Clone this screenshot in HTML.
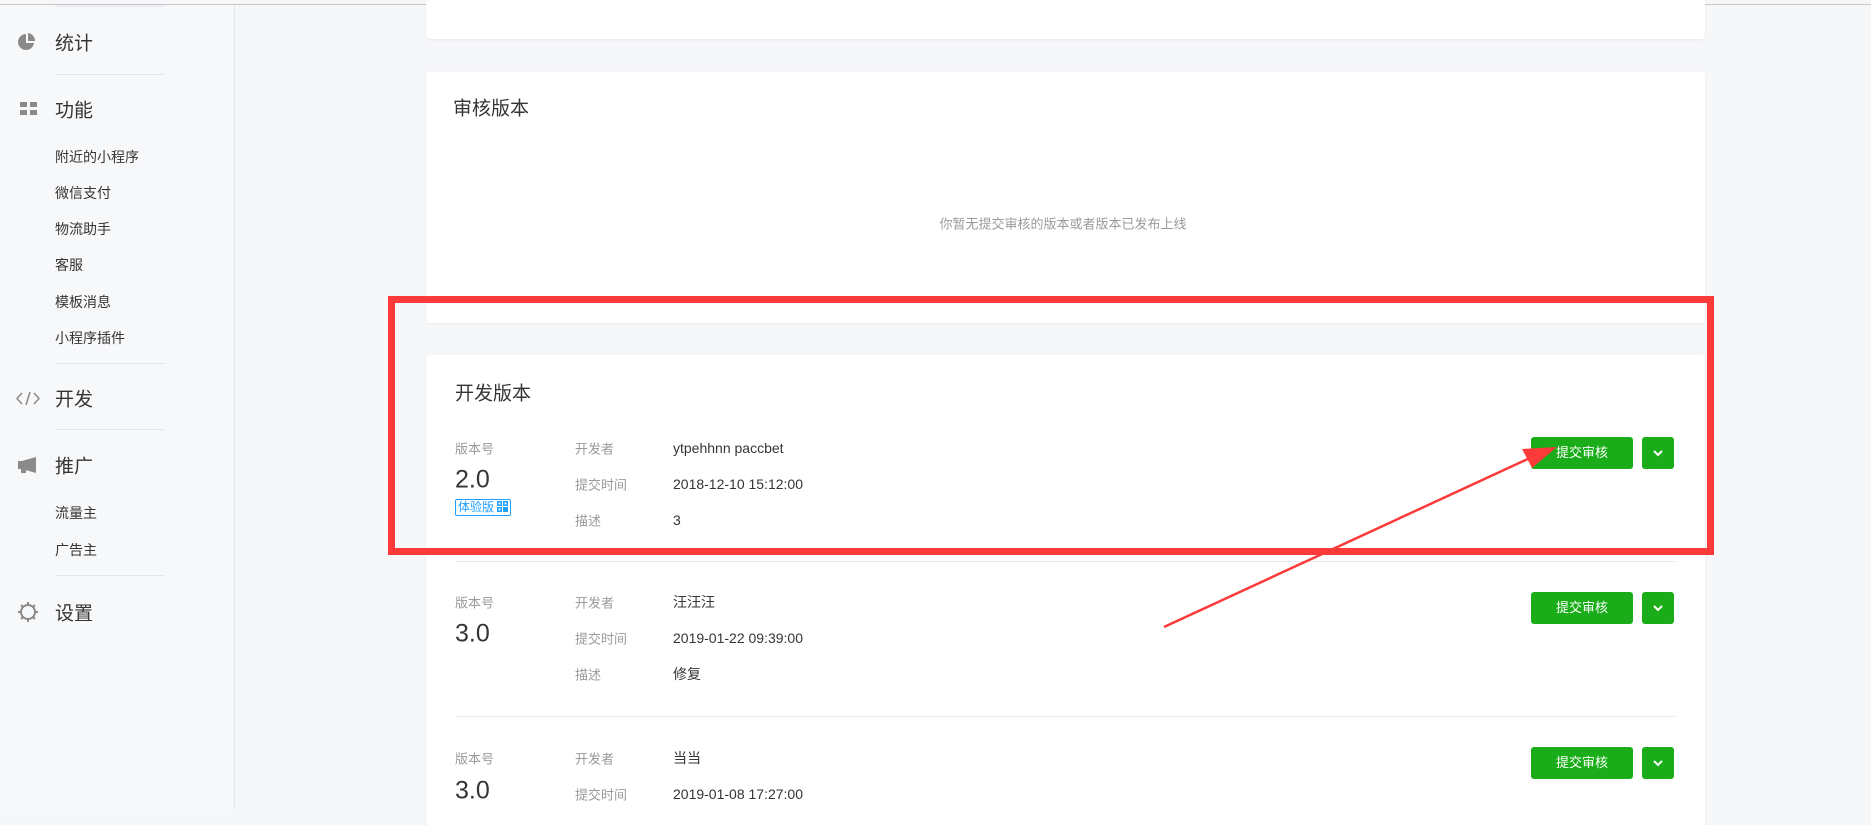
<!DOCTYPE html>
<html><head><meta charset="utf-8"><style>
*{margin:0;padding:0;box-sizing:border-box}
body{width:1871px;height:810px;overflow:hidden;background:#f6f7f9;font-family:"Liberation Sans","Noto Sans CJK SC",sans-serif;position:relative;color:#353535}
.a{position:absolute;white-space:nowrap}
.topline{position:absolute;left:0;top:4px;width:1871px;height:1px;background:#c8c8c8}
.side{position:absolute;left:0;top:5px;width:235px;height:805px;background:#f7f8fa;border-right:1px solid #e4e6e9}
.sep{position:absolute;left:55px;width:110px;height:1px;background:#e4e6e9}
.m{font-size:19px;color:#353535;transform:translateY(-50%)}
.s{font-size:14px;color:#353535;transform:translateY(-50%);left:55px}
.card{position:absolute;background:#fff;left:426px;width:1279px;border-radius:3px;box-shadow:0 1px 2px rgba(0,0,0,.06)}
.lbl{font-size:13px;color:#9a9a9a;transform:translateY(-50%)}
.val{font-size:14px;color:#353535;transform:translateY(-50%)}
.ver{font-size:25px;color:#353535;transform:translateY(-50%)}
.btn{position:absolute;background:#1aad19;color:#fff;font-size:13px;border-radius:3px;text-align:center;line-height:32px;height:32px}
.dd{position:absolute;background:#1aad19;border-radius:3px;width:32px;height:32px}
.hl{position:absolute;left:455px;width:1220px;height:1px;background:#e7e7eb}
</style></head><body>
<div class="topline"></div>
<div class="side"></div>
<div class="sep" style="top:5px;background:#eceef1;height:2px"></div>
<svg class="a" style="left:18px;top:33px" width="18" height="17" viewBox="0 0 18 17"><path d="M8 1A8 8 0 1 0 16 10H8Z" fill="#8a8a8a"/><path d="M10 0A8 8 0 0 1 17 8H10Z" fill="#8a8a8a"/></svg>
<div class="a m" style="left:55px;top:42px">统计</div>
<div class="sep" style="top:74px"></div>
<svg class="a" style="left:20px;top:102px" width="17" height="13"><rect x="0" y="0" width="7" height="5" fill="#8a8a8a"/><rect x="10" y="0" width="7" height="5" fill="#8a8a8a"/><rect x="0" y="8" width="7" height="5" fill="#8a8a8a"/><rect x="10" y="8" width="7" height="5" fill="#8a8a8a"/></svg>
<div class="a m" style="left:55px;top:109px">功能</div>
<div class="a s" style="top:157px">附近的小程序</div>
<div class="a s" style="top:193px">微信支付</div>
<div class="a s" style="top:229px">物流助手</div>
<div class="a s" style="top:265px">客服</div>
<div class="a s" style="top:302px">模板消息</div>
<div class="a s" style="top:338px">小程序插件</div>
<div class="sep" style="top:363px"></div>
<svg class="a" style="left:16px;top:391px" width="24" height="15" fill="none" stroke="#8a8a8a" stroke-width="1.5"><path d="M6 2L1 7.5L6 13M18 2L23 7.5L18 13M14 1L10 14"/></svg>
<div class="a m" style="left:55px;top:398px">开发</div>
<div class="sep" style="top:429px"></div>
<svg class="a" style="left:18px;top:457px" width="20" height="16"><path d="M0 4H4L18 0V16L4 12H0Z" fill="#8a8a8a"/><rect x="3" y="11" width="5" height="5" fill="#8a8a8a"/></svg>
<div class="a m" style="left:55px;top:465px">推广</div>
<div class="a s" style="top:513px">流量主</div>
<div class="a s" style="top:550px">广告主</div>
<div class="sep" style="top:575px"></div>
<svg class="a" style="left:17px;top:601px" width="22" height="22" viewBox="0 0 22 22" fill="none" stroke="#8a8a8a" stroke-width="2"><circle cx="11" cy="11" r="7"/><path d="M11 1V4M11 18V21M1 11H4M18 11H21M4 4L6 6M16 16L18 18M18 4L16 6M4 18L6 16"/></svg>
<div class="a m" style="left:55px;top:612px">设置</div>

<div class="card" style="top:0;height:39px"></div>
<div class="card" style="top:72px;height:251px"></div>
<div class="a" style="left:453px;top:107px;transform:translateY(-50%);font-size:19px">审核版本</div>
<div class="a" style="left:1063px;top:223px;transform:translate(-50%,-50%);font-size:13px;color:#9a9a9a">你暂无提交审核的版本或者版本已发布上线</div>
<div class="card" style="top:355px;height:470px"></div>
<div class="a" style="left:455px;top:392px;transform:translateY(-50%);font-size:19px">开发版本</div>

<div class="a lbl" style="left:455px;top:448px">版本号</div>
<div class="a ver" style="left:455px;top:480px">2.0</div>
<div class="a" style="left:455px;top:499px;height:17px;border:1px solid #1e9fff;border-radius:2px;font-size:12px;line-height:15px;color:#1e9fff;padding:0 2px">体验版 <svg width="11" height="11" style="vertical-align:-1px" fill="#1e9fff"><rect x="0" y="0" width="5" height="5"/><rect x="6" y="0" width="5" height="5"/><rect x="0" y="6" width="5" height="5"/><rect x="6" y="6" width="5" height="5"/><rect x="1.5" y="1.5" width="2" height="2" fill="#fff"/><rect x="7.5" y="1.5" width="2" height="2" fill="#fff"/><rect x="1.5" y="7.5" width="2" height="2" fill="#fff"/></svg></div>
<div class="a lbl" style="left:575px;top:448px">开发者</div>
<div class="a lbl" style="left:575px;top:484px">提交时间</div>
<div class="a lbl" style="left:575px;top:520px">描述</div>
<div class="a val" style="left:673px;top:448px">ytpehhnn paccbet</div>
<div class="a val" style="left:673px;top:484px">2018-12-10 15:12:00</div>
<div class="a val" style="left:673px;top:520px">3</div>
<div class="btn" style="left:1531px;top:437px;width:102px">提交审核</div>
<div class="dd" style="left:1642px;top:437px"><svg width="32" height="32" fill="none" stroke="#fff" stroke-width="2"><path d="M12 14L16 18L20 14"/></svg></div>
<div class="hl" style="top:561px"></div>

<div class="a lbl" style="left:455px;top:602px">版本号</div>
<div class="a ver" style="left:455px;top:634px">3.0</div>
<div class="a lbl" style="left:575px;top:602px">开发者</div>
<div class="a lbl" style="left:575px;top:638px">提交时间</div>
<div class="a lbl" style="left:575px;top:674px">描述</div>
<div class="a val" style="left:673px;top:602px">汪汪汪</div>
<div class="a val" style="left:673px;top:638px">2019-01-22 09:39:00</div>
<div class="a val" style="left:673px;top:674px">修复</div>
<div class="btn" style="left:1531px;top:592px;width:102px">提交审核</div>
<div class="dd" style="left:1642px;top:592px"><svg width="32" height="32" fill="none" stroke="#fff" stroke-width="2"><path d="M12 14L16 18L20 14"/></svg></div>
<div class="hl" style="top:716px"></div>

<div class="a lbl" style="left:455px;top:758px">版本号</div>
<div class="a ver" style="left:455px;top:791px">3.0</div>
<div class="a lbl" style="left:575px;top:758px">开发者</div>
<div class="a lbl" style="left:575px;top:794px">提交时间</div>
<div class="a val" style="left:673px;top:758px">当当</div>
<div class="a val" style="left:673px;top:794px">2019-01-08 17:27:00</div>
<div class="btn" style="left:1531px;top:747px;width:102px">提交审核</div>
<div class="dd" style="left:1642px;top:747px"><svg width="32" height="32" fill="none" stroke="#fff" stroke-width="2"><path d="M12 14L16 18L20 14"/></svg></div>

<div class="a" style="left:388px;top:296px;width:1326px;height:259px;border:7px solid #fc3a3a"></div>
<svg class="a" style="left:0;top:0" width="1871" height="810"><line x1="1164" y1="627" x2="1530" y2="458" stroke="#fc3a3a" stroke-width="2.5"/><path d="M1557 447L1522 449L1532 468Z" fill="#fc3a3a"/></svg>
</body></html>
